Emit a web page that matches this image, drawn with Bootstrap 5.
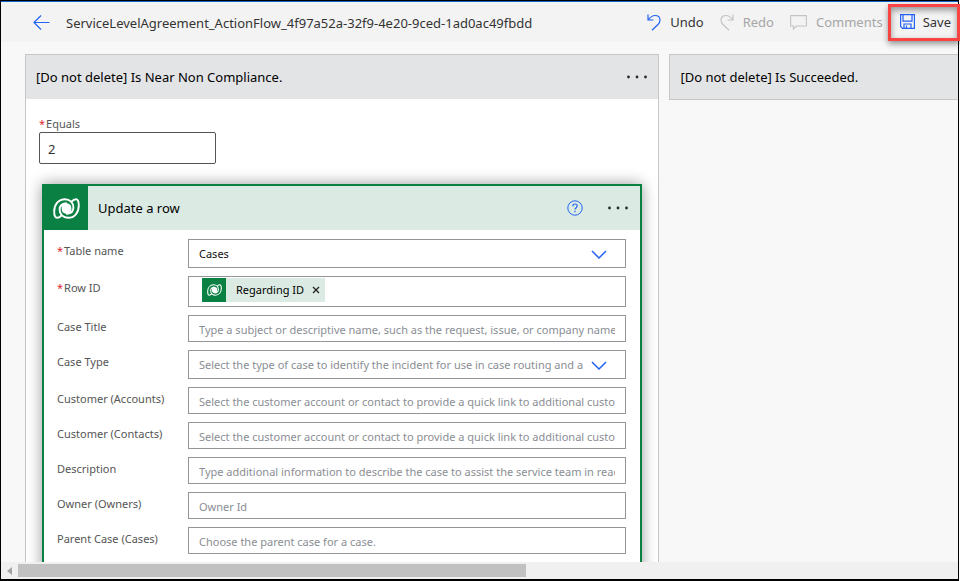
<!DOCTYPE html>
<html lang="en">
<head>
<meta charset="utf-8">
<meta name="viewport" content="width=device-width, initial-scale=1">
<title>Flow designer</title>
<link rel="stylesheet" href="https://cdn.jsdelivr.net/npm/bootstrap@5.3.0/dist/css/bootstrap.min.css">
<style>
  body { font-family: "Noto Sans", "Open Sans", sans-serif; font-size: 13px; line-height: 20px; color: #333; background: #fff; }
  .app-frame { border: 1px solid #000; border-bottom-width: 2px; margin-right: 1px; height: 100vh; background: #f8f8f8; }
  .top-bar { background: #f3f3f3; border-top: 1px solid #0b62c9; height: 41px; padding-left: 32px; }
  .flow-title { margin-left: 16px; padding-top: 2px; }
  .tool-btn { background: none; border: 0; padding: 0; gap: 9px; color: inherit; }
  .tool-btn:disabled { color: #a6a6a6; }
  .tool-btn:disabled svg { color: #c4c4c4; }
  .save-box { border: 3px solid #fa4343; padding: 5px 6px 6px 9px; margin: 0 -2px 0 -11px; height: 37px; gap: 8px; box-shadow: 0 3px 6px #0006, inset 0 3px 6px #0006; position: relative; }
  .blue { color: #2463f5; }
  .canvas-area { padding: 12px 0 0 24px; gap: 10px; }
  .scope-card { border: 1px solid #c8c6c4; }
  .scope-main { flex: 0 0 68%; background: #fff; border-bottom: 0; }
  .scope-next { border-right: 0; }
  .scope-head { background: #e3e4e6; height: 44px; padding: 0 10px; color: #000; }
  .plain-btn { background: none; border: 0; padding: 0; line-height: 0; }
  .field-label { font-size: 11px; line-height: 16px; color: #555; }
  .star { color: #e0272f; margin-right: 1px; }
  .equals { padding: 17px 13px 0; }
  .equals-box { width: 177px; height: 32px; border: 1px solid #555; border-radius: 2px; padding: 2px 8px 0; color: #333; outline: 0; }
  .action-card { border: 2px solid #0b8043; border-bottom: 0; box-shadow: 0 0 14px #0006; margin: 20px 16px 0; background: #fff; }
  .action-head { background: #dbebe3; height: 44px; color: #000; padding-right: 11px; }
  .action-logo { width: 44px; height: 44px; background: #0b8043; color: #fff; margin-right: 10px; }
  .action-body { padding: 9px 14px 40px 13px; display: grid; row-gap: 8px; grid-template-columns: 131px 1fr; }
  .action-body .field-label { padding-top: 4px; }
  .box { border: 1px solid #939598; border-radius: 0; background: #fff; font-size: 11px; line-height: 16px; padding: 2px 10px 0; color: #111; width: 100%; min-width: 0; height: 27px; outline: 0; }
  .box::placeholder { color: #8a8e94; opacity: 1; }
  select.box { appearance: none; height: 29px; padding-top: 0; padding-right: 42px; text-overflow: clip; }
  select.unset { color: #8a8e94; }
  .chevron { position: absolute; right: 19px; top: 11px; pointer-events: none; }
  .token-box { height: 31px; padding: 1px 10px 0 13px; }
  .token { background: #dbebe3; height: 24px; padding-right: 5px; gap: 8px; color: #000; white-space: nowrap; }
  .token-logo { width: 24px; height: 24px; background: #0b8043; color: #fff; margin-right: 2px; }
  .token-input { border: 0; outline: 0; background: none; min-width: 0; padding: 0 4px; }
  .scroll-track { height: 17px; background: #f0f0f0; padding: 2px 0; flex: none; }
  .scroll-arrow { width: 17px; }
  .scroll-thumb { background: #c1c1c1; height: 13px; width: 54%; }
</style>
<script src="https://cdn.jsdelivr.net/npm/bootstrap@5.3.0/dist/js/bootstrap.bundle.min.js"></script>
</head>
<body>
<svg width="0" height="0" class="d-none" aria-hidden="true">
  <symbol id="dataverse" viewBox="0 0 27 21">
    <g fill="none" stroke="currentColor" stroke-width="1.9" stroke-linecap="round">
      <path d="M13 5.2C9 5.6 6.6 8.2 6.6 11.6C6.6 16 10 19.8 15 19.8C21.5 19.8 25.8 14.5 25.8 7.5C25.8 3.5 25 1.2 22.8 1.2C21 1.2 19.8 2.2 18.8 3.4"/>
      <path transform="rotate(180 13.5 10.5)" d="M13 5.2C9 5.6 6.6 8.2 6.6 11.6C6.6 16 10 19.8 15 19.8C21.5 19.8 25.8 14.5 25.8 7.5C25.8 3.5 25 1.2 22.8 1.2C21 1.2 19.8 2.2 18.8 3.4"/>
    </g>
    <path fill="currentColor" d="M8.600 8C9.400 6.400 11.200 5.300 13.800 5.300C16.800 5.300 18.400 7.400 18.400 10.500V13C17.600 14.600 15.800 15.700 13.200 15.700C10.200 15.700 8.600 13.600 8.600 10.500Z"/>
  </symbol>
  <symbol id="more" viewBox="0 0 22 4">
    <g fill="#2b2b2b"><circle cx="2.5" cy="2" r="1.4"/><circle cx="11" cy="2" r="1.4"/><circle cx="19.500" cy="2" r="1.4"/></g>
  </symbol>
  <symbol id="chev" viewBox="0 0 16 9">
    <path d="M1 1L8 8L15 1" fill="none" stroke="#2463f5" stroke-width="1.5"/>
  </symbol>
</svg>

<div class="app-frame d-flex flex-column">
  <header class="top-bar d-flex align-items-center flex-shrink-0">
    <a href="#" class="blue d-flex" aria-label="Back"><svg width="17" height="15" viewBox="0 0 17 15" fill="none" stroke="currentColor" stroke-width="1.2"><path d="M16.500 7.500H1M8 .5L1 7.500L8 14.500"/></svg></a>
    <span class="flow-title">ServiceLevelAgreement_ActionFlow_4f97a52a-32f9-4e20-9ced-1ad0ac49fbdd</span>
    <div class="d-flex align-items-center ms-auto gap-3">
      <button type="button" class="tool-btn d-flex align-items-center"><svg class="blue" width="14" height="17" viewBox="0 0 14 17" fill="none" stroke="currentColor" stroke-width="1.2"><path d="M1 .5V6H6.500M1 6C3.500 2.800 5.500 1.500 8 1.500C11 1.500 13 3.500 13 6.200C13 8 12.300 9.200 11 10.500L5 16.300"/></svg>Undo</button>
      <button type="button" class="tool-btn d-flex align-items-center" disabled><svg width="14" height="17" viewBox="0 0 14 17" fill="none" stroke="currentColor" stroke-width="1.2"><path d="M13 .5V6H7.500M13 6C10.500 2.800 8.500 1.500 6 1.500C3 1.500 1 3.500 1 6.200C1 8 1.700 9.200 3 10.500L9 16.300"/></svg>Redo</button>
      <button type="button" class="tool-btn d-flex align-items-center" disabled><svg width="17" height="15" viewBox="0 0 17 15" fill="none" stroke="currentColor" stroke-width="1.1"><path d="M.6 .6H16.400V11H6.500L3.500 14V11H.6Z"/></svg>Comments</button>
      <button type="button" class="tool-btn save-box d-flex align-items-center"><svg width="15" height="15" viewBox="0 0 15 15" fill="none" stroke="#2463f5" stroke-width="1.2"><path d="M.6 .6H14.400V14.400H2.500L.6 12.500Z"/><path d="M3 .6V7.200H12V.6"/><path d="M4 14.400V10H11V14.400M6.500 11.500V14.400"/></svg>Save</button>
    </div>
  </header>

  <main class="canvas-area d-flex align-items-start flex-grow-1 overflow-hidden">
    <section class="scope-card scope-main align-self-stretch">
      <div class="scope-head d-flex align-items-center justify-content-between">
        <span>[Do not delete] Is Near Non Compliance.</span>
        <button type="button" class="plain-btn" aria-label="More"><svg width="22" height="4"><use href="#more"/></svg></button>
      </div>
      <div class="equals">
        <label for="equals" class="field-label d-block mb-0"><span class="star">*</span>Equals</label>
        <input id="equals" type="text" class="equals-box d-block" value="2">
      </div>

      <div class="action-card">
        <div class="action-head d-flex align-items-center">
          <div class="action-logo d-flex align-items-center justify-content-center"><svg width="27" height="21"><use href="#dataverse"/></svg></div>
          <span>Update a row</span>
          <button type="button" class="plain-btn blue ms-auto me-4" aria-label="Help"><svg width="16" height="16" viewBox="0 0 16 16" fill="none" stroke="currentColor"><circle cx="8" cy="8" r="7.200"/><path stroke-width="1.200" d="M5.800 6.200C5.800 4.800 6.700 4 8 4C9.300 4 10.200 4.900 10.200 6C10.200 7.600 8 7.800 8 9.600M8 10.800V12.200"/></svg></button>
          <button type="button" class="plain-btn" aria-label="More"><svg width="22" height="4"><use href="#more"/></svg></button>
        </div>
        <div class="action-body">
          <label for="table" class="field-label"><span class="star">*</span>Table name</label>
          <div class="position-relative"><select id="table" class="box d-block"><option>Cases</option></select><svg class="chevron" width="16" height="9"><use href="#chev"/></svg></div>

          <label for="rowid" class="field-label"><span class="star">*</span>Row ID</label>
          <div class="box token-box d-flex">
            <div class="token d-flex align-items-center"><span class="token-logo d-flex align-items-center justify-content-center"><svg width="15" height="12"><use href="#dataverse"/></svg></span>Regarding ID<button type="button" class="plain-btn" aria-label="Remove"><svg width="8" height="8" viewBox="0 0 8 8" stroke="#222" stroke-width="1.300"><path d="M1 1L7 7M7 1L1 7"/></svg></button></div>
            <input id="rowid" type="text" class="token-input flex-grow-1">
          </div>

          <label for="title" class="field-label">Case Title</label>
          <input id="title" type="text" class="box" placeholder="Type a subject or descriptive name, such as the request, issue, or company name">

          <label for="type" class="field-label">Case Type</label>
          <div class="position-relative"><select id="type" class="box unset d-block"><option>Select the type of case to identify the incident for use in case routing and analysis.</option></select><svg class="chevron" width="16" height="9"><use href="#chev"/></svg></div>

          <label for="accounts" class="field-label">Customer (Accounts)</label>
          <input id="accounts" type="text" class="box" placeholder="Select the customer account or contact to provide a quick link to additional customer details">

          <label for="contacts" class="field-label">Customer (Contacts)</label>
          <input id="contacts" type="text" class="box" placeholder="Select the customer account or contact to provide a quick link to additional customer details">

          <label for="description" class="field-label">Description</label>
          <input id="description" type="text" class="box" placeholder="Type additional information to describe the case to assist the service team in reaching a resolution">

          <label for="owner" class="field-label">Owner (Owners)</label>
          <input id="owner" type="text" class="box" placeholder="Owner Id">

          <label for="parent" class="field-label">Parent Case (Cases)</label>
          <input id="parent" type="text" class="box" placeholder="Choose the parent case for a case.">
        </div>
      </div>
    </section>

    <section class="scope-card scope-next flex-grow-1">
      <div class="scope-head d-flex align-items-center">[Do not delete] Is Succeeded.</div>
    </section>
  </main>

  <div class="scroll-track d-flex align-items-center">
    <div class="scroll-arrow d-flex justify-content-center"><svg width="5" height="8" viewBox="0 0 5 8"><path d="M5 0V8L0 4Z" fill="#a3a3a3"/></svg></div>
    <div class="flex-grow-1"><div class="scroll-thumb"></div></div>
  </div>
</div>
</body>
</html>
